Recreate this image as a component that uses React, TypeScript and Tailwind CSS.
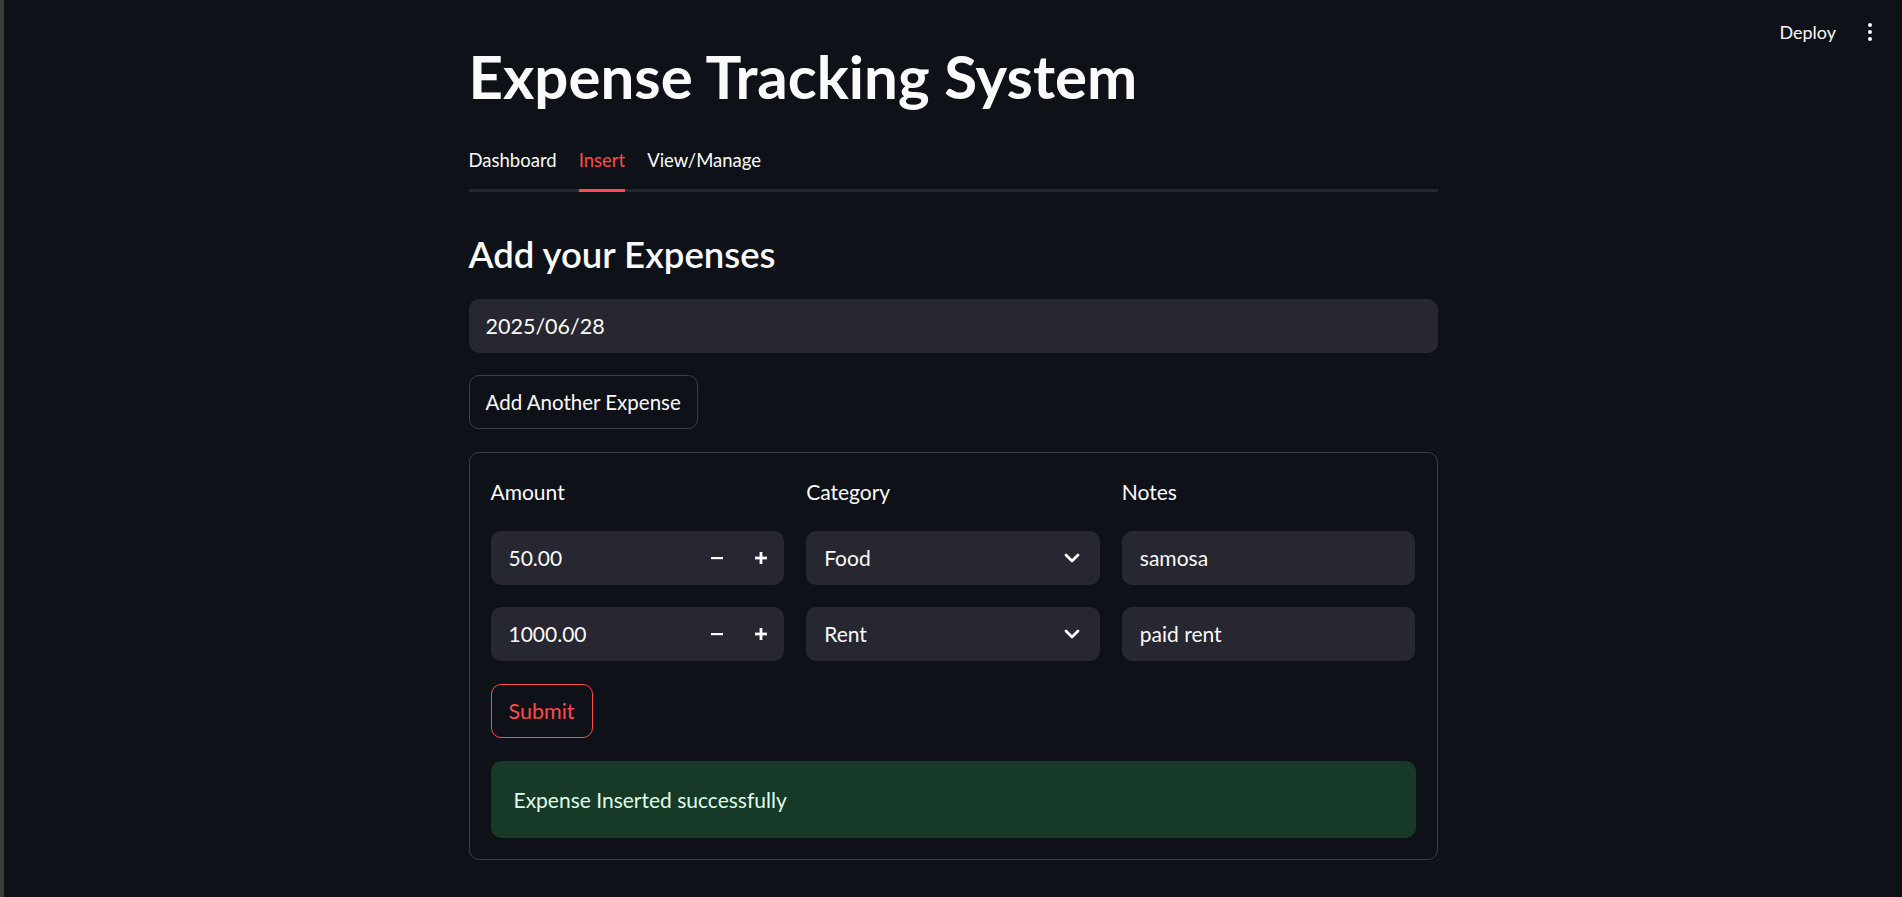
import React from "react";

const font = { fontFamily: "Lato, 'Noto Sans', sans-serif" };

function Minus() {
  return (
    <svg width="14" height="14" viewBox="0 0 14 14">
      <rect x="1" y="6" width="12" height="2.2" fill="#fafafa" />
    </svg>
  );
}
function Plus() {
  return (
    <svg width="14" height="14" viewBox="0 0 14 14">
      <rect x="1" y="5.6" width="12" height="2.8" fill="#fafafa" />
      <rect x="5.6" y="1" width="2.8" height="12" fill="#fafafa" />
    </svg>
  );
}
function Chevron() {
  return (
    <svg width="16" height="10" viewBox="0 0 16 10">
      <path d="M2 2 L8 8 L14 2" stroke="#fafafa" strokeWidth="2.8" fill="none" strokeLinecap="round" strokeLinejoin="round" />
    </svg>
  );
}

function NumberInput({ value }: { value: string }) {
  return (
    <div className="flex h-[54px] items-center rounded-[10px] bg-[#262730]">
      <div className="flex-1 pl-[18px] text-[21px] text-[#fafafa]">{value}</div>
      <div className="flex h-full w-[44px] items-center justify-center"><Minus /></div>
      <div className="mr-[1px] flex h-full w-[44px] items-center justify-center"><Plus /></div>
    </div>
  );
}

function Select({ value }: { value: string }) {
  return (
    <div className="flex h-[54px] items-center rounded-[10px] bg-[#262730] pl-[18px] pr-[20px]">
      <div className="flex-1 text-[21px] text-[#fafafa]">{value}</div>
      <Chevron />
    </div>
  );
}

function TextInput({ value }: { value: string }) {
  return (
    <div className="flex h-[54px] items-center rounded-[10px] bg-[#262730] pl-[18px] text-[21px] text-[#fafafa]">
      {value}
    </div>
  );
}

export default function App() {
  return (
    <div className="relative h-[897px] w-full overflow-hidden border-l-[4px] border-[#3b3b3b] bg-[#0e1117] text-[#fafafa]" style={font}>
      <div className="absolute right-[30px] top-0 flex h-[64px] items-center gap-[32px]">
        <span className="text-[18px] text-[#fafafa]">Deploy</span>
        <div className="flex flex-col items-center gap-[3px]">
          <span className="block h-[4px] w-[4px] rounded-full bg-[#fafafa]" />
          <span className="block h-[4px] w-[4px] rounded-full bg-[#fafafa]" />
          <span className="block h-[4px] w-[4px] rounded-full bg-[#fafafa]" />
        </div>
      </div>

      <div className="mx-auto w-[969px] pt-[40px]">
        <h1 className="text-[60px] font-bold leading-[72px]">Expense Tracking System</h1>

        <div className="mt-[34px] flex gap-[22px] border-b-[3px] border-[#262730]">
          <div className="-mb-[3px] border-b-[3px] border-transparent pb-[15px] text-[18.5px] leading-[28px]">Dashboard</div>
          <div className="-mb-[3px] border-b-[3px] border-[#ff4b4b] pb-[15px] text-[18.5px] leading-[28px] text-[#ff4b4b]">Insert</div>
          <div className="-mb-[3px] border-b-[3px] border-transparent pb-[15px] text-[18.5px] leading-[28px]">View/Manage</div>
        </div>

        <h3 className="mt-[40px] text-[36.5px] font-semibold leading-[44px]">Add your Expenses</h3>

        <div className="mt-[23px] flex h-[54px] items-center rounded-[10px] bg-[#262730] pl-[17px] text-[21.5px]">2025/06/28</div>

        <div className="mt-[22px] flex">
          <div className="flex h-[54px] items-center rounded-[10px] border border-[#3c3e44] px-[16px] text-[20.5px]">Add Another Expense</div>
        </div>

        <div className="mt-[23px] rounded-[10px] border border-[#3c3e44] px-[21px] pb-[21px] pt-[24px]">
          <div className="grid grid-cols-3 gap-x-[22px]">
            <div className="text-[21px] leading-[30px]">Amount</div>
            <div className="text-[21px] leading-[30px]">Category</div>
            <div className="text-[21px] leading-[30px]">Notes</div>
          </div>
          <div className="mt-[24px] grid grid-cols-3 gap-x-[22px]">
            <NumberInput value="50.00" />
            <Select value="Food" />
            <TextInput value="samosa" />
          </div>
          <div className="mt-[22px] grid grid-cols-3 gap-x-[22px]">
            <NumberInput value="1000.00" />
            <Select value="Rent" />
            <TextInput value="paid rent" />
          </div>
          <div className="mt-[23px] flex">
            <div className="flex h-[54px] items-center rounded-[10px] border border-[#ff4b4b] px-[17px] text-[21.5px] text-[#ff4b4b]">Submit</div>
          </div>
          <div className="mt-[23px] flex h-[77px] items-center rounded-[10px] bg-[#173928] pl-[23px] text-[21px] text-[#dffde9]">
            Expense Inserted successfully
          </div>
        </div>
      </div>
    </div>
  );
}
